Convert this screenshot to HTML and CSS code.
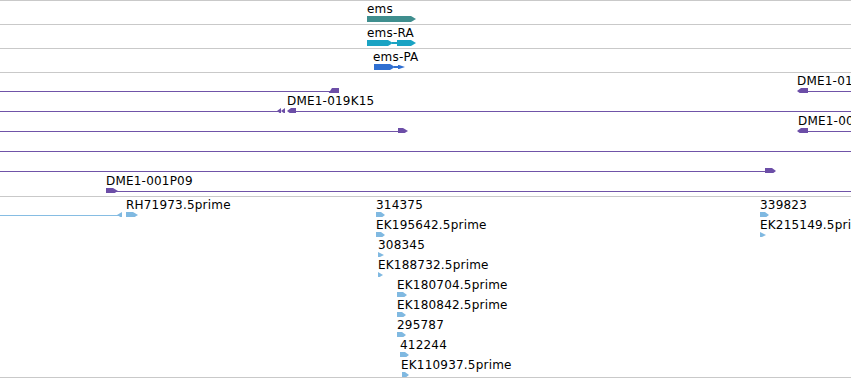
FILE: index.html
```html
<!DOCTYPE html>
<html lang="en">
<head>
    <meta charset="UTF-8">
    <meta name="viewport" content="width=device-width, initial-scale=1.0">
    <title>Track view - ems</title>
    <link rel="stylesheet" href="styles.css">
</head>
<body>
    <div class="browser">
        <!-- gene models -->
        <div class="track gene-track">
            <div class="lane">
                <span class="label" style="left:367px">ems</span>
                <svg viewBox="0 0 851 23">
                    <polygon class="gene" points="367,15 411,15 416,18 411,21 367,21"/>
                </svg>
            </div>
            <div class="lane">
                <span class="label" style="left:367px">ems-RA</span>
                <svg viewBox="0 0 851 23">
                    <polygon class="mrna" points="367,15 388,15 393,18 388,21 367,21"/>
                    <rect class="mrna" x="392" y="17" width="6" height="2"/>
                    <polygon class="mrna" points="397,15 411,15 416,18 411,21 397,21"/>
                </svg>
            </div>
            <div class="lane">
                <span class="label" style="left:373px">ems-PA</span>
                <svg viewBox="0 0 851 23">
                    <polygon class="cds" points="374,15 390,15 395,18 390,21 374,21"/>
                    <rect class="cds" x="394" y="17" width="5" height="2"/>
                    <polygon class="cds" points="398,16 399,16 405,18 399,20 398,20"/>
                </svg>
            </div>
        </div>

        <!-- BAC clones -->
        <div class="track clone-track">
            <div class="lane">
                <span class="label" style="left:797px">DME1-01</span>
                <svg viewBox="0 0 851 20">
                    <line x1="0" y1="18.5" x2="334" y2="18.5"/>
                    <polygon points="328,21 332,15 339,15 339,21"/>
                    <line x1="800" y1="18.5" x2="851" y2="18.5"/>
                    <polygon points="797,18 801,15 808,15 808,21 801,21"/>
                </svg>
            </div>
            <div class="lane">
                <span class="label" style="left:287px">DME1-019K15</span>
                <svg viewBox="0 0 851 20">
                    <line x1="0" y1="18.5" x2="278" y2="18.5"/>
                    <polygon points="277,18 281,15 281,21"/>
                    <polygon points="281,18 285,15 285,21"/>
                    <line x1="290" y1="18.5" x2="851" y2="18.5"/>
                    <polygon points="287,18 291,15 296,15 296,21 291,21"/>
                </svg>
            </div>
            <div class="lane">
                <span class="label" style="left:798px">DME1-00</span>
                <svg viewBox="0 0 851 20">
                    <line x1="0" y1="18.5" x2="400" y2="18.5"/>
                    <polygon points="398,15 403,15 408,18 403,21 398,21"/>
                    <line x1="800" y1="18.5" x2="851" y2="18.5"/>
                    <polygon points="797,18 801,15 808,15 808,21 801,21"/>
                </svg>
            </div>
            <div class="lane">
                <svg viewBox="0 0 851 20">
                    <line x1="0" y1="18.5" x2="851" y2="18.5"/>
                </svg>
            </div>
            <div class="lane">
                <svg viewBox="0 0 851 20">
                    <line x1="0" y1="18.5" x2="768" y2="18.5"/>
                    <polygon points="765,15 772,15 776,18 772,21 765,21"/>
                </svg>
            </div>
            <div class="lane">
                <span class="label" style="left:106px">DME1-001P09</span>
                <svg viewBox="0 0 851 20">
                    <line x1="110" y1="18.5" x2="851" y2="18.5"/>
                    <polygon points="106,15 113,15 118,18 113,21 106,21"/>
                </svg>
            </div>
        </div>

        <!-- EST alignments -->
        <div class="track est-track">
            <div class="lane">
                <span class="label" style="left:126px">RH71973.5prime</span>
                <span class="label" style="left:376px">314375</span>
                <span class="label" style="left:760px">339823</span>
                <svg viewBox="0 0 851 20">
                    <line x1="0" y1="18.5" x2="119" y2="18.5"/>
                    <polygon points="117,18 122,15 122,21"/>
                    <polygon points="126,15 133,15 138,18 133,21 126,21"/>
                    <polygon points="376,15 381,15 385,18 381,21 376,21"/>
                    <polygon points="760,15 765,15 769,18 765,21 760,21"/>
                </svg>
            </div>
            <div class="lane">
                <span class="label" style="left:376px">EK195642.5prime</span>
                <span class="label" style="left:760px">EK215149.5prime</span>
                <svg viewBox="0 0 851 20">
                    <polygon points="376,15 381,15 385,18 381,21 376,21"/>
                    <polygon points="760,15 766,18 760,21"/>
                </svg>
            </div>
            <div class="lane">
                <span class="label" style="left:378px">308345</span>
                <svg viewBox="0 0 851 20">
                    <polygon points="378,15 384,18 378,21"/>
                </svg>
            </div>
            <div class="lane">
                <span class="label" style="left:378px">EK188732.5prime</span>
                <svg viewBox="0 0 851 20">
                    <polygon points="378,15 383,18 378,21"/>
                </svg>
            </div>
            <div class="lane">
                <span class="label" style="left:397px">EK180704.5prime</span>
                <svg viewBox="0 0 851 20">
                    <polygon points="397,15 403,15 407,18 403,21 397,21"/>
                </svg>
            </div>
            <div class="lane">
                <span class="label" style="left:397px">EK180842.5prime</span>
                <svg viewBox="0 0 851 20">
                    <polygon points="397,15 402,15 406,18 402,21 397,21"/>
                </svg>
            </div>
            <div class="lane">
                <span class="label" style="left:397px">295787</span>
                <svg viewBox="0 0 851 20">
                    <polygon points="397,15 402,15 406,18 402,21 397,21"/>
                </svg>
            </div>
            <div class="lane">
                <span class="label" style="left:400px">412244</span>
                <svg viewBox="0 0 851 20">
                    <polygon points="400,15 405,15 409,18 405,21 400,21"/>
                </svg>
            </div>
            <div class="lane">
                <span class="label" style="left:401px">EK110937.5prime</span>
                <svg viewBox="0 0 851 20">
                    <polygon points="402,15 405,15 409,18 405,21 402,21"/>
                </svg>
            </div>
        </div>
    </div>
</body>
</html>
```

FILE: styles.css
```css
body {
    margin: 0;
    padding: 0;
    background-color: #ffffff;
    font-family: "DejaVu Sans", "Liberation Sans", sans-serif;
    font-size: 12px;
    color: #000000;
    overflow: hidden;
}
.browser {
    width: 851px;
    overflow: hidden;
}
.track {
    border-top: 1px solid #c9c9c9;
}
.lane {
    position: relative;
    height: 20px;
}
.lane svg {
    display: block;
    width: 851px;
    height: 20px;
}
.label {
    position: absolute;
    top: 0;
    line-height: 16px;
    letter-spacing: 0.2px;
    white-space: nowrap;
}

/* gene models */
.gene-track {
    border-top: none;
}
.gene-track .lane {
    height: 23px;
    border-top: 1px solid #c9c9c9;
}
.gene-track .lane svg {
    height: 23px;
}
.gene {
    fill: #3f8e8e;
}
.mrna {
    fill: #1aa3c3;
}
.cds {
    fill: #2f6fd1;
}

/* clones */
.clone-track {
    padding-bottom: 3px;
}
.clone-track line {
    stroke: #7054a8;
    stroke-width: 1;
    shape-rendering: crispEdges;
}
.clone-track polygon {
    fill: #6c4ea7;
}

/* ESTs */
.est-track {
    border-bottom: 1px solid #c9c9c9;
}
.est-track line {
    stroke: #86bde3;
    stroke-width: 1;
    shape-rendering: crispEdges;
}
.est-track polygon {
    fill: #80b9e1;
}
```
